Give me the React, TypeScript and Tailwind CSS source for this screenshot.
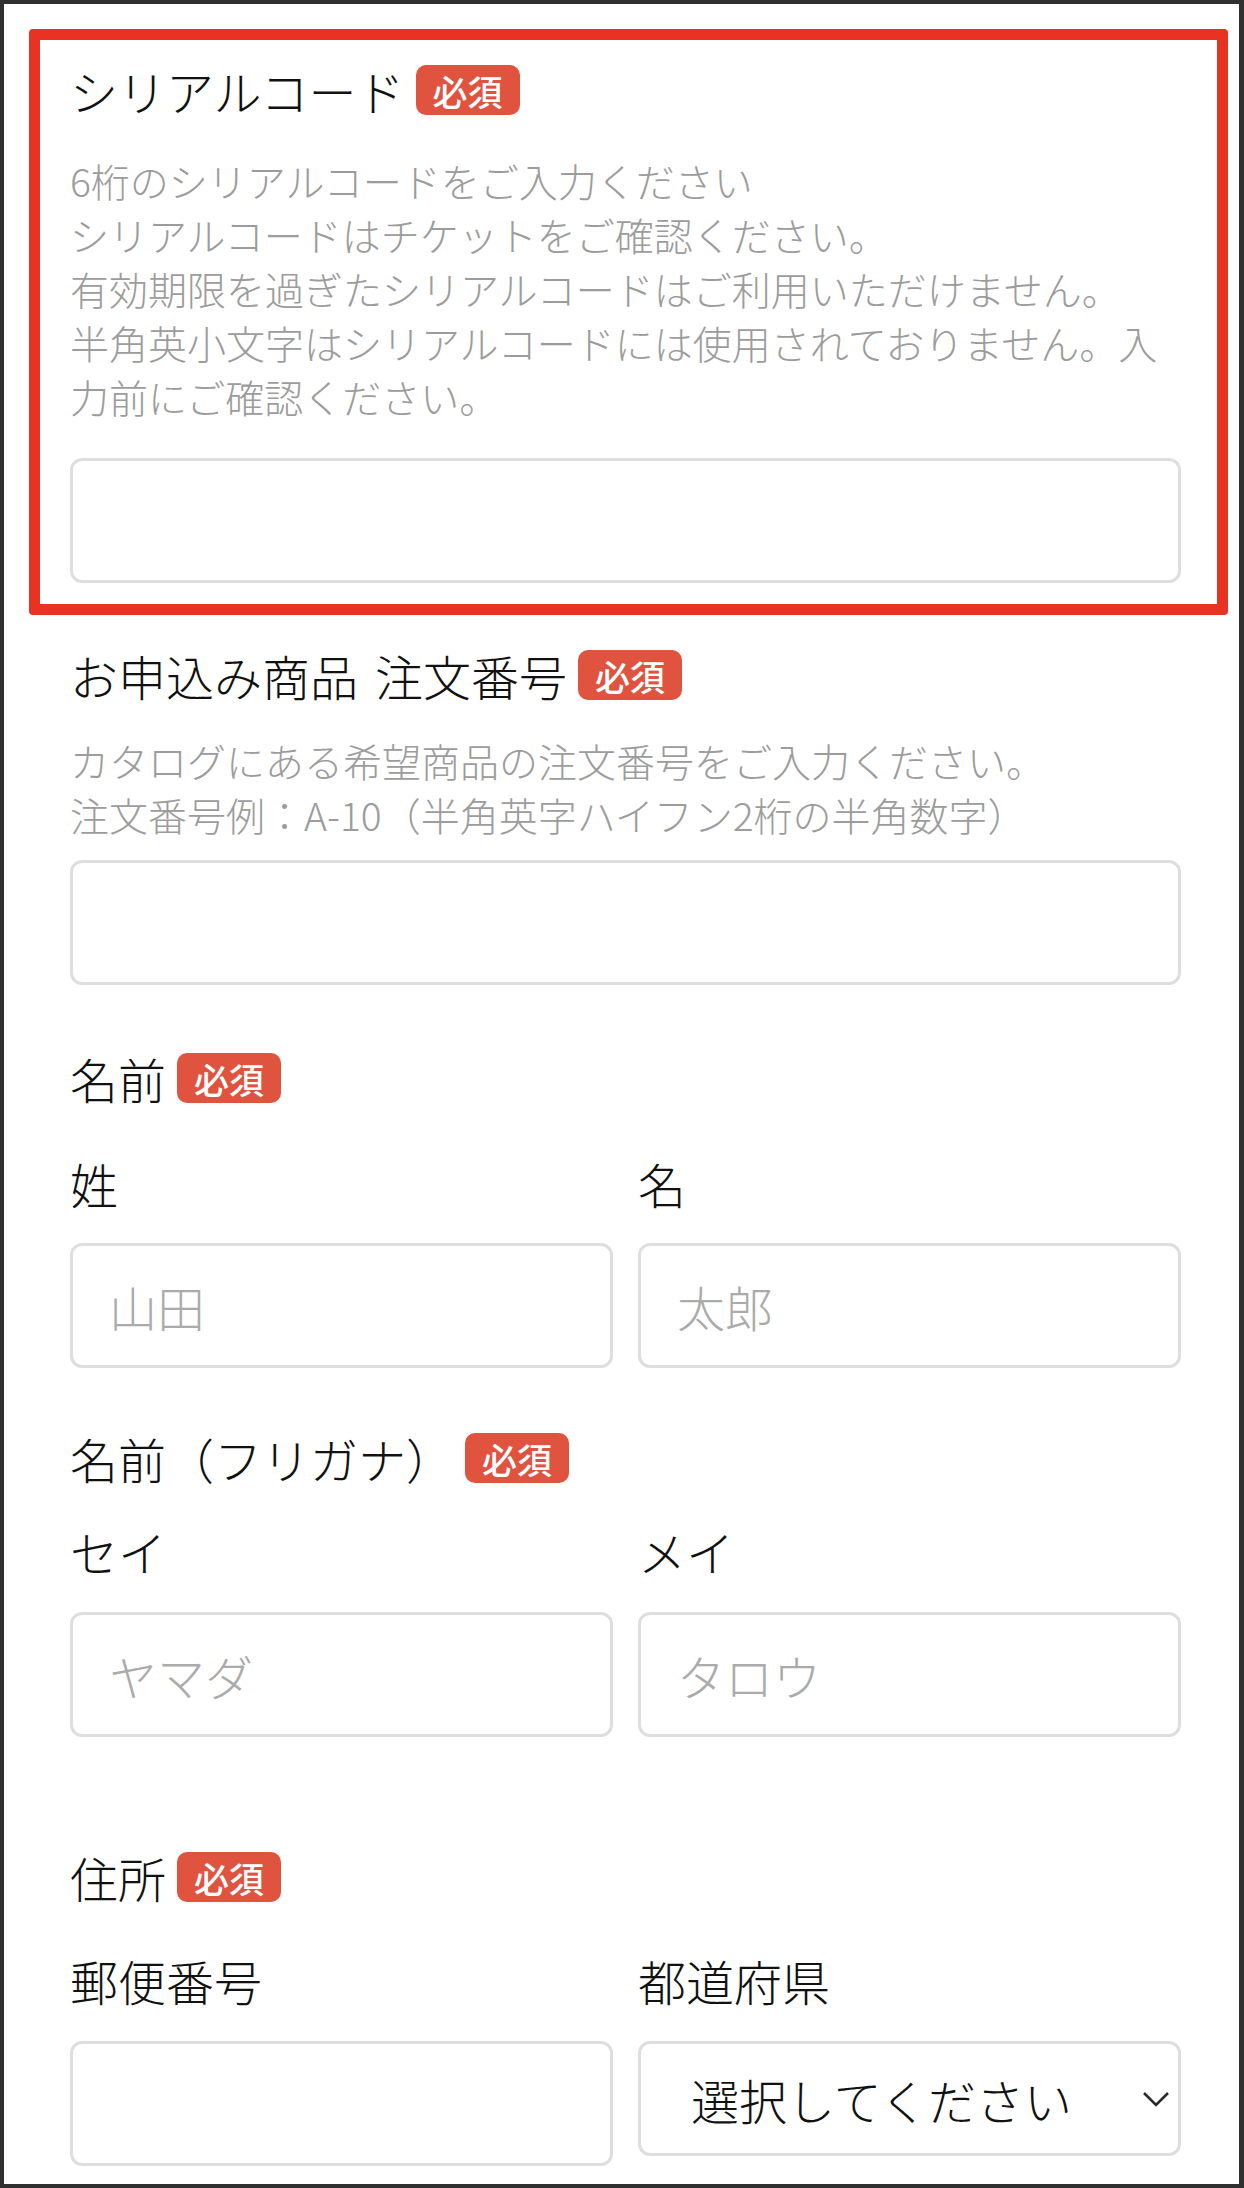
import React from "react";

const Badge = () => (
  <span className="inline-flex h-[50px] items-center rounded-[10px] bg-[#e0533f] px-[17px] text-[35px] font-medium leading-none text-white">
    必須
  </span>
);

const FieldTitle = ({ label, className = "" }: { label: React.ReactNode; className?: string }) => (
  <div className={`flex items-center gap-[11px] ${className}`}>
    <p className="text-[48px] font-light leading-[60px] text-[#111]">{label}</p>
    <Badge />
  </div>
);

const TextBox = ({ placeholder = "", className = "" }: { placeholder?: string; className?: string }) => (
  <input
    type="text"
    placeholder={placeholder}
    className={`block h-[125px] w-full rounded-[12px] border-[3px] border-[#dedede] bg-white pl-[36px] text-[48px] font-light text-[#111] outline-none placeholder:text-[#ababab] ${className}`}
  />
);

const SubLabel = ({ text }: { text: string }) => (
  <p className="text-[48px] font-light leading-[60px] text-[#111]">{text}</p>
);

export default function App() {
  return (
    <div className="h-[2188px] w-full overflow-hidden border-4 border-r-[5px] border-[#303030] bg-white pl-[66px] pr-[58px] pt-[25px] font-['Noto_Sans_CJK_JP',sans-serif]">
      {/* シリアルコード（赤枠で強調） */}
      <div className="-ml-[41px] -mr-[47px] rounded-[4px] border-[11px] border-[#e83323] pb-[21px] pl-[30px] pr-[36px] pt-[20px]">
        <FieldTitle label="シリアルコード" />
        <div className="mt-[33px] text-[39px] font-light leading-[54px] text-[#9c9c9c]">
          <p>6桁のシリアルコードをご入力ください</p>
          <p>シリアルコードはチケットをご確認ください。</p>
          <p>有効期限を過ぎたシリアルコードはご利用いただけません。</p>
          <p>半角英小文字はシリアルコードには使用されておりません。入力前にご確認ください。</p>
        </div>
        <TextBox className="mt-[35px]" />
      </div>

      {/* 注文番号 */}
      <FieldTitle
        label={
          <>
            お申込み商品<span className="ml-[17px]">注文番号</span>
          </>
        }
        className="mt-[30px]"
      />
      <div className="mt-[28px] text-[39px] font-light leading-[54px] text-[#9c9c9c]">
        <p>カタログにある希望商品の注文番号をご入力ください。</p>
        <p>注文番号例：A-10（半角英字ハイフン2桁の半角数字）</p>
      </div>
      <TextBox className="mt-[19px]" />

      {/* 名前 */}
      <FieldTitle label="名前" className="mt-[63px]" />
      <div className="mt-[45px] grid grid-cols-2 gap-x-[25px]">
        <div>
          <SubLabel text="姓" />
          <TextBox placeholder="山田" className="mt-[30px]" />
        </div>
        <div>
          <SubLabel text="名" />
          <TextBox placeholder="太郎" className="mt-[30px]" />
        </div>
      </div>

      {/* フリガナ */}
      <FieldTitle label="名前（フリガナ）" className="mt-[60px]" />
      <div className="mt-[33px] grid grid-cols-2 gap-x-[25px]">
        <div>
          <SubLabel text="セイ" />
          <TextBox placeholder="ヤマダ" className="mt-[31px]" />
        </div>
        <div>
          <SubLabel text="メイ" />
          <TextBox placeholder="タロウ" className="mt-[31px]" />
        </div>
      </div>

      {/* 住所 */}
      <FieldTitle label="住所" className="mt-[110px]" />
      <div className="mt-[43px] grid grid-cols-2 gap-x-[25px]">
        <div>
          <SubLabel text="郵便番号" />
          <TextBox className="mt-[31px]" />
        </div>
        <div>
          <SubLabel text="都道府県" />
          <div className="relative mt-[31px]">
            <select className="block h-[115px] w-full appearance-none rounded-[12px] border-[3px] border-[#dedede] bg-white pl-[50px] text-[48px] font-light text-[#111] outline-none">
              <option>選択してください</option>
              <option>東京都</option>
              <option>大阪府</option>
            </select>
            <svg
              className="pointer-events-none absolute right-[11px] top-[50px] h-[16px] w-[28px]"
              viewBox="0 0 28 16"
              fill="none"
              stroke="#2a2a2a"
              strokeWidth="2.6"
            >
              <path d="M2 2l12 12L26 2" />
            </svg>
          </div>
        </div>
      </div>
    </div>
  );
}
